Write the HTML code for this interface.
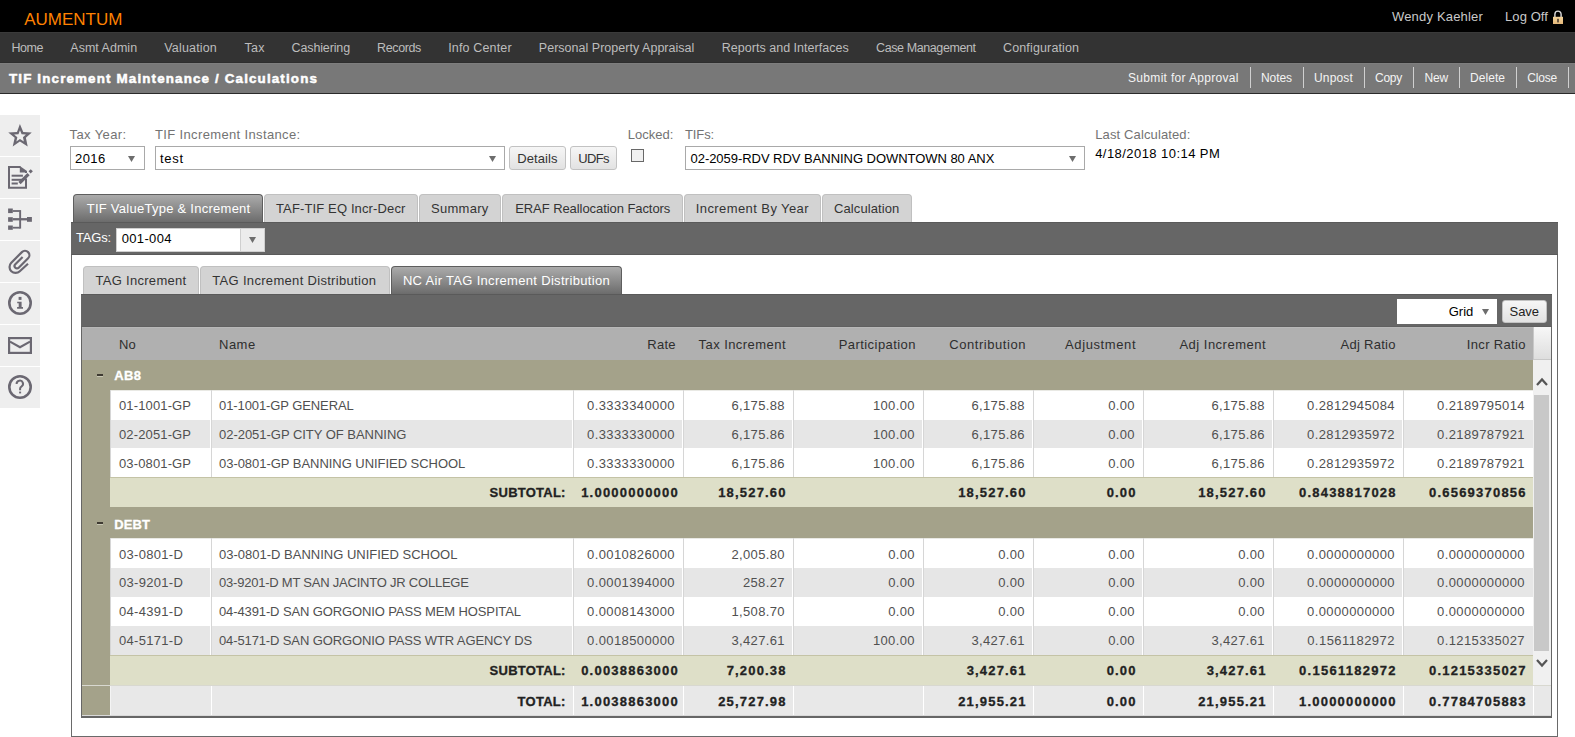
<!DOCTYPE html><html><head><meta charset="utf-8"><title>TIF Increment Maintenance</title><style>
html,body{margin:0;padding:0}
body{width:1575px;height:737px;overflow:hidden;position:relative;background:#fff;font-family:"Liberation Sans",sans-serif}
.a{position:absolute;box-sizing:border-box}
.t{position:absolute;white-space:nowrap}
svg{position:absolute;overflow:visible}
</style></head><body>
<div class="a" style="left:0px;top:0px;width:1575px;height:32px;background:#000"></div>
<div class="t" style="top:10.61px;font-size:17px;line-height:17px;color:#ff8200;letter-spacing:-0.029px;left:24.30px;">AUMENTUM</div>
<div class="t" style="top:10.00px;font-size:13px;line-height:13px;color:#c9c9c9;letter-spacing:0.179px;left:1392.00px;">Wendy Kaehler</div>
<div class="t" style="top:10.00px;font-size:13px;line-height:13px;color:#c9c9c9;letter-spacing:0.085px;left:1505.00px;">Log Off</div>
<svg style="left:1553px;top:9px" width="11" height="15" viewBox="0 0 11 15"><path d="M1.9 8 V5.2 A3.1 3.1 0 0 1 8.1 5.2 V8" fill="none" stroke="#dcdcdc" stroke-width="1.4"/><defs><linearGradient id="lg" x1="0" y1="0" x2="0" y2="1"><stop offset="0" stop-color="#f3d49a"/><stop offset="1" stop-color="#e4b77a"/></linearGradient></defs><rect x="0" y="7.8" width="10" height="7.2" fill="url(#lg)"/><rect x="4.2" y="9.8" width="1.6" height="3.6" fill="#4a3c30"/></svg>
<div class="a" style="left:0px;top:32px;width:1575px;height:31px;background:#333"></div>
<div class="a" style="left:0px;top:32px;width:1575px;height:1px;background:#3a3a3a"></div>
<div class="a" style="left:0px;top:62px;width:1575px;height:1px;background:#2e2e2e"></div>
<div class="t" style="top:42.42px;font-size:12.5px;line-height:12.5px;color:#bdbdbd;letter-spacing:-0.386px;left:11.40px;">Home</div>
<div class="t" style="top:42.42px;font-size:12.5px;line-height:12.5px;color:#bdbdbd;letter-spacing:0.011px;left:70.30px;">Asmt Admin</div>
<div class="t" style="top:42.42px;font-size:12.5px;line-height:12.5px;color:#bdbdbd;letter-spacing:0.165px;left:164.30px;">Valuation</div>
<div class="t" style="top:42.42px;font-size:12.5px;line-height:12.5px;color:#bdbdbd;letter-spacing:0.182px;left:244.60px;">Tax</div>
<div class="t" style="top:42.42px;font-size:12.5px;line-height:12.5px;color:#bdbdbd;letter-spacing:-0.137px;left:291.60px;">Cashiering</div>
<div class="t" style="top:42.42px;font-size:12.5px;line-height:12.5px;color:#bdbdbd;letter-spacing:-0.364px;left:377.00px;">Records</div>
<div class="t" style="top:42.42px;font-size:12.5px;line-height:12.5px;color:#bdbdbd;letter-spacing:0.152px;left:448.20px;">Info Center</div>
<div class="t" style="top:42.42px;font-size:12.5px;line-height:12.5px;color:#bdbdbd;letter-spacing:0.024px;left:538.80px;">Personal Property Appraisal</div>
<div class="t" style="top:42.42px;font-size:12.5px;line-height:12.5px;color:#bdbdbd;letter-spacing:0.021px;left:721.80px;">Reports and Interfaces</div>
<div class="t" style="top:42.42px;font-size:12.5px;line-height:12.5px;color:#bdbdbd;letter-spacing:-0.407px;left:876.10px;">Case Management</div>
<div class="t" style="top:42.42px;font-size:12.5px;line-height:12.5px;color:#bdbdbd;letter-spacing:0.142px;left:1003.00px;">Configuration</div>
<div class="a" style="left:0px;top:63px;width:1575px;height:30px;background:#787878"></div>
<div class="a" style="left:0px;top:63px;width:1575px;height:1px;background:#7e7e7e"></div>
<div class="a" style="left:0px;top:93px;width:1575px;height:1px;background:#2a2a2a"></div>
<div class="t" style="top:71.66px;font-size:13.4px;line-height:13.4px;color:#fff;font-weight:bold;-webkit-text-stroke:0.5px currentColor;letter-spacing:1.141px;left:9.00px;">TIF Increment Maintenance / Calculations</div>
<div class="t" style="top:71.84px;font-size:12px;line-height:12px;color:#f4f4f4;letter-spacing:0.321px;left:1128.00px;">Submit for Approval</div>
<div class="t" style="top:71.84px;font-size:12px;line-height:12px;color:#f4f4f4;letter-spacing:-0.069px;left:1261.00px;">Notes</div>
<div class="t" style="top:71.84px;font-size:12px;line-height:12px;color:#f4f4f4;letter-spacing:0.164px;left:1314.00px;">Unpost</div>
<div class="t" style="top:71.84px;font-size:12px;line-height:12px;color:#f4f4f4;letter-spacing:-0.254px;left:1375.00px;">Copy</div>
<div class="t" style="top:71.84px;font-size:12px;line-height:12px;color:#f4f4f4;letter-spacing:-0.272px;left:1424.60px;">New</div>
<div class="t" style="top:71.84px;font-size:12px;line-height:12px;color:#f4f4f4;letter-spacing:0.052px;left:1470.00px;">Delete</div>
<div class="t" style="top:71.84px;font-size:12px;line-height:12px;color:#f4f4f4;letter-spacing:-0.197px;left:1527.30px;">Close</div>
<div class="a" style="left:1250px;top:67px;width:1px;height:21px;background:#d0d0d0"></div>
<div class="a" style="left:1303px;top:67px;width:1px;height:21px;background:#d0d0d0"></div>
<div class="a" style="left:1364px;top:67px;width:1px;height:21px;background:#d0d0d0"></div>
<div class="a" style="left:1413px;top:67px;width:1px;height:21px;background:#d0d0d0"></div>
<div class="a" style="left:1459px;top:67px;width:1px;height:21px;background:#d0d0d0"></div>
<div class="a" style="left:1516px;top:67px;width:1px;height:21px;background:#d0d0d0"></div>
<div class="a" style="left:1568px;top:67px;width:1px;height:21px;background:#d0d0d0"></div>
<div class="a" style="left:0px;top:115px;width:40px;height:41px;background:#eeeeee"></div>
<div class="a" style="left:0px;top:157px;width:40px;height:41px;background:#eeeeee"></div>
<div class="a" style="left:0px;top:199px;width:40px;height:41px;background:#eeeeee"></div>
<div class="a" style="left:0px;top:241px;width:40px;height:41px;background:#eeeeee"></div>
<div class="a" style="left:0px;top:283px;width:40px;height:41px;background:#eeeeee"></div>
<div class="a" style="left:0px;top:325px;width:40px;height:41px;background:#eeeeee"></div>
<div class="a" style="left:0px;top:367px;width:40px;height:41px;background:#eeeeee"></div>
<svg style="left:8px;top:123px" width="24" height="24" viewBox="0 0 24 24"><path d="M11.90 0.90 L15.25 9.00 L23.75 9.40 L17.90 14.80 L19.70 23.50 L11.90 18.40 L4.70 23.50 L6.70 14.80 L0.25 9.40 L9.00 9.00 Z M11.95 7.25 L13.62 11.30 L17.88 11.50 L14.95 14.20 L15.85 18.55 L11.95 16.00 L8.35 18.55 L9.35 14.20 L6.12 11.50 L10.50 11.30 Z" fill="#6b6872" fill-rule="evenodd"/></svg>
<svg style="left:4px;top:160px" width="32" height="34" viewBox="0 0 32 34"><path d="M5 7 H16.5 M5 6 V28.8 M4 27.8 H23 M22 28.8 V18.5 M22 13 V11" fill="none" stroke="#6b6872" stroke-width="2"/><path d="M15.8 6 L23 11 V12.6 H15.8 Z" fill="#6b6872"/><rect x="7.6" y="14.7" width="11.3" height="2" fill="#6b6872"/><rect x="7.6" y="18.8" width="10.4" height="2" fill="#6b6872"/><rect x="7.6" y="22.5" width="6.2" height="2" fill="#6b6872"/><path d="M15.5 23.2 L24.5 14.2" stroke="#6b6872" stroke-width="3.2"/><path d="M25.6 12.4 L27.8 10.2" stroke="#6b6872" stroke-width="3"/></svg>
<svg style="left:4px;top:202px" width="32" height="34" viewBox="0 0 32 34"><g fill="#6b6872"><rect x="4.1" y="6.5" width="4.7" height="4.6"/><rect x="4.1" y="15.2" width="4.7" height="4.6"/><rect x="4.1" y="23.5" width="4.7" height="4.3"/><rect x="23" y="15" width="4.9" height="4.8"/><rect x="15.2" y="8.1" width="1.9" height="18.5"/><rect x="8.8" y="8.1" width="7" height="1.8"/><rect x="8.8" y="24.8" width="7" height="1.8"/><rect x="8.8" y="16.1" width="14.2" height="2.3"/></g></svg>
<svg style="left:4px;top:244px" width="32" height="34" viewBox="0 0 32 34"><path d="M24 19.8 L15.8 27.2 A6 6 0 0 1 7.3 18.7 L17.9 8.1 A4.38 4.38 0 0 1 24.1 14.3 L14.7 23.7 A2.4 2.4 0 0 1 11.3 20.3 L18.6 13" fill="none" stroke="#6b6872" stroke-width="2.2"/></svg>
<svg style="left:8px;top:291.3px" width="24" height="24" viewBox="0 0 24 24"><circle cx="12" cy="12" r="10.7" fill="none" stroke="#6b6872" stroke-width="2.6"/><rect x="10.6" y="5.9" width="2.9" height="3" fill="#6b6872"/><path d="M9.2 10.7 H13.6 V16.1 H15 V17.8 H9.1 V16.1 H10.7 V12.3 H9.2 Z" fill="#6b6872"/></svg>
<svg style="left:8px;top:337px" width="24" height="17" viewBox="0 0 24 17"><rect x="1.1" y="1.1" width="21.8" height="14.8" fill="none" stroke="#6b6872" stroke-width="2.2"/><path d="M2 4.6 L12 10.2 L22 4.6" fill="none" stroke="#6b6872" stroke-width="2.2"/></svg>
<svg style="left:8px;top:375.4px" width="24" height="24" viewBox="0 0 24 24"><circle cx="12" cy="12" r="10.7" fill="none" stroke="#6b6872" stroke-width="2.6"/><path d="M8.6 8.9 A3.2 3.2 0 1 1 13.4 11.6 Q12.1 12.4 12.1 13.8 V15.3" fill="none" stroke="#6b6872" stroke-width="2"/><rect x="11.1" y="16.6" width="2" height="1.8" fill="#6b6872"/></svg>
<div class="t" style="top:128.00px;font-size:13px;line-height:13px;color:#737373;letter-spacing:0.389px;left:69.60px;">Tax Year:</div>
<div class="t" style="top:128.00px;font-size:13px;line-height:13px;color:#737373;letter-spacing:0.357px;left:155.00px;">TIF Increment Instance:</div>
<div class="t" style="top:128.00px;font-size:13px;line-height:13px;color:#737373;letter-spacing:0.022px;left:627.80px;">Locked:</div>
<div class="t" style="top:128.00px;font-size:13px;line-height:13px;color:#737373;letter-spacing:-0.101px;left:685.00px;">TIFs:</div>
<div class="t" style="top:128.00px;font-size:13px;line-height:13px;color:#737373;letter-spacing:0.128px;left:1095.20px;">Last Calculated:</div>
<div class="t" style="top:147.00px;font-size:13px;line-height:13px;color:#000;letter-spacing:0.443px;left:1095.20px;">4/18/2018 10:14 PM</div>
<div class="a" style="left:70px;top:146px;width:75px;height:24px;background:#fff;border:1px solid #a9a9a9"></div>
<svg style="left:128.4px;top:156px" width="7" height="6" viewBox="0 0 7 6"><path d="M0 0 H7 L3.5 6 Z" fill="#6d6d6d"/></svg>
<div class="t" style="top:152.00px;font-size:13px;line-height:13px;color:#000;letter-spacing:0.406px;left:75.00px;">2016</div>
<div class="a" style="left:155px;top:146px;width:350px;height:24px;background:#fff;border:1px solid #a9a9a9"></div>
<svg style="left:488.7px;top:156px" width="7" height="6" viewBox="0 0 7 6"><path d="M0 0 H7 L3.5 6 Z" fill="#6d6d6d"/></svg>
<div class="t" style="top:152.00px;font-size:13px;line-height:13px;color:#000;letter-spacing:0.696px;left:160.00px;">test</div>
<div class="a" style="left:509px;top:146px;width:57px;height:24px;background:linear-gradient(#f6f6f6,#e2e2e2);border:1px solid #c2c2c2;border-radius:3px"></div>
<div class="t" style="top:152.00px;font-size:13px;line-height:13px;color:#333;letter-spacing:0.079px;left:517.20px;">Details</div>
<div class="a" style="left:570px;top:146px;width:47px;height:24px;background:linear-gradient(#f6f6f6,#e2e2e2);border:1px solid #c2c2c2;border-radius:3px"></div>
<div class="t" style="top:152.00px;font-size:13px;line-height:13px;color:#333;letter-spacing:-0.630px;left:578.30px;">UDFs</div>
<div class="a" style="left:631px;top:149px;width:13px;height:13px;background:#f0f0f0;border:1px solid #686868"></div>
<div class="a" style="left:685px;top:146px;width:400px;height:24px;background:#fff;border:1px solid #a9a9a9"></div>
<svg style="left:1069px;top:156px" width="7" height="6" viewBox="0 0 7 6"><path d="M0 0 H7 L3.5 6 Z" fill="#6d6d6d"/></svg>
<div class="t" style="top:152.00px;font-size:13px;line-height:13px;color:#000;letter-spacing:-0.040px;left:690.50px;">02-2059-RDV RDV BANNING DOWNTOWN 80 ANX</div>
<div class="a" style="left:73px;top:194px;width:190px;height:28px;background:linear-gradient(#ababab,#6c6c6c);border:1px solid #5e5e5e;border-bottom:none;border-radius:4px 4px 0 0"></div>
<div class="t" style="top:202.00px;font-size:13px;line-height:13px;color:#fff;letter-spacing:0.261px;left:86.70px;">TIF ValueType &amp; Increment</div>
<div class="a" style="left:264px;top:194px;width:154px;height:28px;background:#d3d3d3;border:1px solid #c0c0c0;border-bottom:none;border-radius:4px 4px 0 0"></div>
<div class="t" style="top:202.00px;font-size:13px;line-height:13px;color:#333;letter-spacing:0.133px;left:276.00px;">TAF-TIF EQ Incr-Decr</div>
<div class="a" style="left:419px;top:194px;width:82px;height:28px;background:#d3d3d3;border:1px solid #c0c0c0;border-bottom:none;border-radius:4px 4px 0 0"></div>
<div class="t" style="top:202.00px;font-size:13px;line-height:13px;color:#333;letter-spacing:0.282px;left:431.00px;">Summary</div>
<div class="a" style="left:502px;top:194px;width:181px;height:28px;background:#d3d3d3;border:1px solid #c0c0c0;border-bottom:none;border-radius:4px 4px 0 0"></div>
<div class="t" style="top:202.00px;font-size:13px;line-height:13px;color:#333;letter-spacing:-0.069px;left:515.20px;">ERAF Reallocation Factors</div>
<div class="a" style="left:684px;top:194px;width:137px;height:28px;background:#d3d3d3;border:1px solid #c0c0c0;border-bottom:none;border-radius:4px 4px 0 0"></div>
<div class="t" style="top:202.00px;font-size:13px;line-height:13px;color:#333;letter-spacing:0.409px;left:695.80px;">Increment By Year</div>
<div class="a" style="left:822px;top:194px;width:90px;height:28px;background:#d3d3d3;border:1px solid #c0c0c0;border-bottom:none;border-radius:4px 4px 0 0"></div>
<div class="t" style="top:202.00px;font-size:13px;line-height:13px;color:#333;letter-spacing:0.096px;left:834.00px;">Calculation</div>
<div class="a" style="left:71px;top:222px;width:1487px;height:515px;border:1px solid #6a6a6a;border-top:none;background:#fff"></div>
<div class="a" style="left:71px;top:222px;width:1487px;height:33px;background:#666"></div>
<div class="a" style="left:71px;top:222px;width:1487px;height:1px;background:#5a5a5a"></div>
<div class="a" style="left:71px;top:254px;width:1487px;height:1px;background:#5a5a5a"></div>
<div class="t" style="top:231.00px;font-size:13px;line-height:13px;color:#fff;letter-spacing:-0.172px;left:76.00px;">TAGs:</div>
<div class="a" style="left:116px;top:228px;width:149px;height:24px;background:#fff;border:1px solid #cfcfcf"></div>
<div class="a" style="left:240px;top:229px;width:24px;height:22px;background:#ececec;border-left:1px solid #cfcfcf"></div>
<svg style="left:249px;top:237px" width="7" height="6" viewBox="0 0 7 6"><path d="M0 0 H7 L3.5 6 Z" fill="#6d6d6d"/></svg>
<div class="t" style="top:232.00px;font-size:13px;line-height:13px;color:#000;letter-spacing:0.348px;left:121.70px;">001-004</div>
<div class="a" style="left:83px;top:266px;width:116px;height:28px;background:#d3d3d3;border:1px solid #c0c0c0;border-bottom:none;border-radius:4px 4px 0 0"></div>
<div class="t" style="top:274.00px;font-size:13px;line-height:13px;color:#333;letter-spacing:0.279px;left:95.60px;">TAG Increment</div>
<div class="a" style="left:200px;top:266px;width:190px;height:28px;background:#d3d3d3;border:1px solid #c0c0c0;border-bottom:none;border-radius:4px 4px 0 0"></div>
<div class="t" style="top:274.00px;font-size:13px;line-height:13px;color:#333;letter-spacing:0.314px;left:212.30px;">TAG Increment Distribution</div>
<div class="a" style="left:391px;top:266px;width:231px;height:28px;background:linear-gradient(#ababab,#6c6c6c);border:1px solid #5e5e5e;border-bottom:none;border-radius:4px 4px 0 0"></div>
<div class="t" style="top:274.00px;font-size:13px;line-height:13px;color:#fff;letter-spacing:0.313px;left:402.90px;">NC Air TAG Increment Distribution</div>
<div class="a" style="left:81px;top:294px;width:1471px;height:424px;background:#666"></div>
<div class="a" style="left:81px;top:294px;width:1471px;height:1px;background:#5a5a5a"></div>
<div class="a" style="left:81px;top:326px;width:1471px;height:1px;background:#606060"></div>
<div class="a" style="left:1397px;top:299px;width:100px;height:25px;background:#fff"></div>
<div class="t" style="top:305.00px;font-size:13px;line-height:13px;color:#000;right:101.69px;">Grid</div>
<svg style="left:1482px;top:309px" width="7" height="6" viewBox="0 0 7 6"><path d="M0 0 H7 L3.5 6 Z" fill="#6d6d6d"/></svg>
<div class="a" style="left:1502px;top:300px;width:45px;height:23px;background:linear-gradient(#f6f6f6,#e2e2e2);border:1px solid #c2c2c2;border-radius:3px"></div>
<div class="t" style="top:305.00px;font-size:13px;line-height:13px;color:#222;letter-spacing:-0.060px;left:1509.60px;">Save</div>
<div class="a" style="left:82px;top:327px;width:1451px;height:33px;background:#b0b0b0"></div>
<div class="a" style="left:82px;top:327px;width:1451px;height:1px;background:#b8b8b8"></div>
<div class="a" style="left:1533px;top:327px;width:18px;height:33px;background:linear-gradient(#f7f7f7,#dedede);border-bottom:1px solid #c8c8c8;border-left:1px solid #c8c8c8"></div>
<div class="t" style="top:338.00px;font-size:13px;line-height:13px;color:#2e2e2e;letter-spacing:0.178px;left:119.00px;">No</div>
<div class="t" style="top:338.00px;font-size:13px;line-height:13px;color:#2e2e2e;letter-spacing:0.494px;left:219.00px;">Name</div>
<div class="t" style="top:338.00px;font-size:13px;line-height:13px;color:#2e2e2e;letter-spacing:0.257px;right:899.24px;">Rate</div>
<div class="t" style="top:338.00px;font-size:13px;line-height:13px;color:#2e2e2e;letter-spacing:0.445px;right:789.06px;">Tax Increment</div>
<div class="t" style="top:338.00px;font-size:13px;line-height:13px;color:#2e2e2e;letter-spacing:0.440px;right:659.06px;">Participation</div>
<div class="t" style="top:338.00px;font-size:13px;line-height:13px;color:#2e2e2e;letter-spacing:0.563px;right:548.94px;">Contribution</div>
<div class="t" style="top:338.00px;font-size:13px;line-height:13px;color:#2e2e2e;letter-spacing:0.606px;right:438.89px;">Adjustment</div>
<div class="t" style="top:338.00px;font-size:13px;line-height:13px;color:#2e2e2e;letter-spacing:0.487px;right:309.01px;">Adj Increment</div>
<div class="t" style="top:338.00px;font-size:13px;line-height:13px;color:#2e2e2e;letter-spacing:0.275px;right:179.22px;">Adj Ratio</div>
<div class="t" style="top:338.00px;font-size:13px;line-height:13px;color:#2e2e2e;letter-spacing:0.345px;right:49.16px;">Incr Ratio</div>
<div class="a" style="left:1533px;top:360px;width:18px;height:325px;background:#f0f0f0"></div>
<div class="a" style="left:1534px;top:395px;width:15px;height:256px;background:#c8c8c8"></div>
<svg style="left:1536px;top:377px" width="12" height="9" viewBox="0 0 12 9"><path d="M1 8 L6 2.5 L11 8" fill="none" stroke="#555" stroke-width="2.2"/></svg>
<svg style="left:1536px;top:659px" width="12" height="9" viewBox="0 0 12 9"><path d="M1 1 L6 6.5 L11 1" fill="none" stroke="#555" stroke-width="2.2"/></svg>
<div class="a" style="left:82px;top:360px;width:1451px;height:356px;background:#a4a28a"></div>
<div class="a" style="left:97px;top:374px;width:6px;height:2px;background:#3e3a32"></div>
<div class="a" style="left:97px;top:376px;width:6px;height:1px;background:#c8c7b4"></div>
<div class="t" style="top:369.00px;font-size:13px;line-height:13px;color:#fff;font-weight:bold;-webkit-text-stroke:0.3px currentColor;letter-spacing:0.384px;left:114.20px;">AB8</div>
<div class="a" style="left:110px;top:390px;width:1423px;height:30px;background:#fff"></div>
<div class="a" style="left:110px;top:390px;width:1423px;height:1px;background:#e9e9e4"></div>
<div class="a" style="left:110px;top:390px;width:1px;height:30px;background:#d6d6d6"></div>
<div class="a" style="left:211px;top:390px;width:1px;height:30px;background:#d6d6d6"></div>
<div class="a" style="left:573px;top:390px;width:1px;height:30px;background:#d6d6d6"></div>
<div class="a" style="left:683px;top:390px;width:1px;height:30px;background:#d6d6d6"></div>
<div class="a" style="left:793px;top:390px;width:1px;height:30px;background:#d6d6d6"></div>
<div class="a" style="left:923px;top:390px;width:1px;height:30px;background:#d6d6d6"></div>
<div class="a" style="left:1033px;top:390px;width:1px;height:30px;background:#d6d6d6"></div>
<div class="a" style="left:1143px;top:390px;width:1px;height:30px;background:#d6d6d6"></div>
<div class="a" style="left:1273px;top:390px;width:1px;height:30px;background:#d6d6d6"></div>
<div class="a" style="left:1403px;top:390px;width:1px;height:30px;background:#d6d6d6"></div>
<div class="t" style="top:399.00px;font-size:13px;line-height:13px;color:#505050;letter-spacing:0.134px;left:119.00px;">01-1001-GP</div>
<div class="t" style="top:399.00px;font-size:13px;line-height:13px;color:#505050;letter-spacing:-0.089px;left:219.00px;">01-1001-GP GENERAL</div>
<div class="t" style="top:399.00px;font-size:13px;line-height:13px;color:#505050;letter-spacing:0.389px;right:900.11px;">0.3333340000</div>
<div class="t" style="top:399.00px;font-size:13px;line-height:13px;color:#505050;letter-spacing:0.355px;right:790.14px;">6,175.88</div>
<div class="t" style="top:399.00px;font-size:13px;line-height:13px;color:#505050;letter-spacing:0.372px;right:660.13px;">100.00</div>
<div class="t" style="top:399.00px;font-size:13px;line-height:13px;color:#505050;letter-spacing:0.355px;right:550.14px;">6,175.88</div>
<div class="t" style="top:399.00px;font-size:13px;line-height:13px;color:#505050;letter-spacing:0.355px;right:440.14px;">0.00</div>
<div class="t" style="top:399.00px;font-size:13px;line-height:13px;color:#505050;letter-spacing:0.355px;right:310.14px;">6,175.88</div>
<div class="t" style="top:399.00px;font-size:13px;line-height:13px;color:#505050;letter-spacing:0.389px;right:180.11px;">0.2812945084</div>
<div class="t" style="top:399.00px;font-size:13px;line-height:13px;color:#505050;letter-spacing:0.389px;right:50.11px;">0.2189795014</div>
<div class="a" style="left:110px;top:420px;width:1423px;height:28px;background:#e6e6e6"></div>
<div class="a" style="left:110px;top:420px;width:1px;height:28px;background:#d6d6d6"></div>
<div class="a" style="left:211px;top:420px;width:1px;height:28px;background:#d6d6d6"></div>
<div class="a" style="left:210px;top:420px;width:1px;height:28px;background:#fff"></div>
<div class="a" style="left:573px;top:420px;width:1px;height:28px;background:#d6d6d6"></div>
<div class="a" style="left:572px;top:420px;width:1px;height:28px;background:#fff"></div>
<div class="a" style="left:683px;top:420px;width:1px;height:28px;background:#d6d6d6"></div>
<div class="a" style="left:682px;top:420px;width:1px;height:28px;background:#fff"></div>
<div class="a" style="left:793px;top:420px;width:1px;height:28px;background:#d6d6d6"></div>
<div class="a" style="left:792px;top:420px;width:1px;height:28px;background:#fff"></div>
<div class="a" style="left:923px;top:420px;width:1px;height:28px;background:#d6d6d6"></div>
<div class="a" style="left:922px;top:420px;width:1px;height:28px;background:#fff"></div>
<div class="a" style="left:1033px;top:420px;width:1px;height:28px;background:#d6d6d6"></div>
<div class="a" style="left:1032px;top:420px;width:1px;height:28px;background:#fff"></div>
<div class="a" style="left:1143px;top:420px;width:1px;height:28px;background:#d6d6d6"></div>
<div class="a" style="left:1142px;top:420px;width:1px;height:28px;background:#fff"></div>
<div class="a" style="left:1273px;top:420px;width:1px;height:28px;background:#d6d6d6"></div>
<div class="a" style="left:1272px;top:420px;width:1px;height:28px;background:#fff"></div>
<div class="a" style="left:1403px;top:420px;width:1px;height:28px;background:#d6d6d6"></div>
<div class="a" style="left:1402px;top:420px;width:1px;height:28px;background:#fff"></div>
<div class="t" style="top:428.00px;font-size:13px;line-height:13px;color:#505050;letter-spacing:0.134px;left:119.00px;">02-2051-GP</div>
<div class="t" style="top:428.00px;font-size:13px;line-height:13px;color:#505050;letter-spacing:-0.029px;left:219.00px;">02-2051-GP CITY OF BANNING</div>
<div class="t" style="top:428.00px;font-size:13px;line-height:13px;color:#505050;letter-spacing:0.389px;right:900.11px;">0.3333330000</div>
<div class="t" style="top:428.00px;font-size:13px;line-height:13px;color:#505050;letter-spacing:0.355px;right:790.14px;">6,175.86</div>
<div class="t" style="top:428.00px;font-size:13px;line-height:13px;color:#505050;letter-spacing:0.372px;right:660.13px;">100.00</div>
<div class="t" style="top:428.00px;font-size:13px;line-height:13px;color:#505050;letter-spacing:0.355px;right:550.14px;">6,175.86</div>
<div class="t" style="top:428.00px;font-size:13px;line-height:13px;color:#505050;letter-spacing:0.355px;right:440.14px;">0.00</div>
<div class="t" style="top:428.00px;font-size:13px;line-height:13px;color:#505050;letter-spacing:0.355px;right:310.14px;">6,175.86</div>
<div class="t" style="top:428.00px;font-size:13px;line-height:13px;color:#505050;letter-spacing:0.389px;right:180.11px;">0.2812935972</div>
<div class="t" style="top:428.00px;font-size:13px;line-height:13px;color:#505050;letter-spacing:0.389px;right:50.11px;">0.2189787921</div>
<div class="a" style="left:110px;top:448px;width:1423px;height:29px;background:#fff"></div>
<div class="a" style="left:110px;top:448px;width:1px;height:29px;background:#d6d6d6"></div>
<div class="a" style="left:211px;top:448px;width:1px;height:29px;background:#d6d6d6"></div>
<div class="a" style="left:573px;top:448px;width:1px;height:29px;background:#d6d6d6"></div>
<div class="a" style="left:683px;top:448px;width:1px;height:29px;background:#d6d6d6"></div>
<div class="a" style="left:793px;top:448px;width:1px;height:29px;background:#d6d6d6"></div>
<div class="a" style="left:923px;top:448px;width:1px;height:29px;background:#d6d6d6"></div>
<div class="a" style="left:1033px;top:448px;width:1px;height:29px;background:#d6d6d6"></div>
<div class="a" style="left:1143px;top:448px;width:1px;height:29px;background:#d6d6d6"></div>
<div class="a" style="left:1273px;top:448px;width:1px;height:29px;background:#d6d6d6"></div>
<div class="a" style="left:1403px;top:448px;width:1px;height:29px;background:#d6d6d6"></div>
<div class="t" style="top:457.00px;font-size:13px;line-height:13px;color:#505050;letter-spacing:0.134px;left:119.00px;">03-0801-GP</div>
<div class="t" style="top:457.00px;font-size:13px;line-height:13px;color:#505050;letter-spacing:-0.039px;left:219.00px;">03-0801-GP BANNING UNIFIED SCHOOL</div>
<div class="t" style="top:457.00px;font-size:13px;line-height:13px;color:#505050;letter-spacing:0.389px;right:900.11px;">0.3333330000</div>
<div class="t" style="top:457.00px;font-size:13px;line-height:13px;color:#505050;letter-spacing:0.355px;right:790.14px;">6,175.86</div>
<div class="t" style="top:457.00px;font-size:13px;line-height:13px;color:#505050;letter-spacing:0.372px;right:660.13px;">100.00</div>
<div class="t" style="top:457.00px;font-size:13px;line-height:13px;color:#505050;letter-spacing:0.355px;right:550.14px;">6,175.86</div>
<div class="t" style="top:457.00px;font-size:13px;line-height:13px;color:#505050;letter-spacing:0.355px;right:440.14px;">0.00</div>
<div class="t" style="top:457.00px;font-size:13px;line-height:13px;color:#505050;letter-spacing:0.355px;right:310.14px;">6,175.86</div>
<div class="t" style="top:457.00px;font-size:13px;line-height:13px;color:#505050;letter-spacing:0.389px;right:180.11px;">0.2812935972</div>
<div class="t" style="top:457.00px;font-size:13px;line-height:13px;color:#505050;letter-spacing:0.389px;right:50.11px;">0.2189787921</div>
<div class="a" style="left:110px;top:477px;width:1423px;height:30px;background:#dedfc8"></div>
<div class="a" style="left:110px;top:477px;width:1423px;height:1px;background:#c4c3a6"></div>
<div class="t" style="top:486.00px;font-size:13px;line-height:13px;color:#222;font-weight:bold;-webkit-text-stroke:0.3px currentColor;letter-spacing:0.236px;right:1009.36px;">SUBTOTAL:</div>
<div class="t" style="top:486.00px;font-size:13px;line-height:13px;color:#222;font-weight:bold;-webkit-text-stroke:0.3px currentColor;letter-spacing:1.217px;right:896.08px;">1.0000000000</div>
<div class="t" style="top:486.00px;font-size:13px;line-height:13px;color:#222;font-weight:bold;-webkit-text-stroke:0.3px currentColor;letter-spacing:1.187px;right:788.31px;">18,527.60</div>
<div class="t" style="top:486.00px;font-size:13px;line-height:13px;color:#222;font-weight:bold;-webkit-text-stroke:0.3px currentColor;letter-spacing:1.187px;right:548.31px;">18,527.60</div>
<div class="t" style="top:486.00px;font-size:13px;line-height:13px;color:#222;font-weight:bold;-webkit-text-stroke:0.3px currentColor;letter-spacing:1.181px;right:438.32px;">0.00</div>
<div class="t" style="top:486.00px;font-size:13px;line-height:13px;color:#222;font-weight:bold;-webkit-text-stroke:0.3px currentColor;letter-spacing:1.187px;right:308.31px;">18,527.60</div>
<div class="t" style="top:486.00px;font-size:13px;line-height:13px;color:#222;font-weight:bold;-webkit-text-stroke:0.3px currentColor;letter-spacing:1.217px;right:178.28px;">0.8438817028</div>
<div class="t" style="top:486.00px;font-size:13px;line-height:13px;color:#222;font-weight:bold;-webkit-text-stroke:0.3px currentColor;letter-spacing:1.217px;right:48.28px;">0.6569370856</div>
<div class="a" style="left:97px;top:522px;width:6px;height:2px;background:#3e3a32"></div>
<div class="a" style="left:97px;top:524px;width:6px;height:1px;background:#c8c7b4"></div>
<div class="t" style="top:518.00px;font-size:13px;line-height:13px;color:#fff;font-weight:bold;-webkit-text-stroke:0.3px currentColor;letter-spacing:0.160px;left:114.20px;">DEBT</div>
<div class="a" style="left:110px;top:538px;width:1423px;height:30px;background:#fff"></div>
<div class="a" style="left:110px;top:538px;width:1423px;height:1px;background:#e9e9e4"></div>
<div class="a" style="left:110px;top:538px;width:1px;height:30px;background:#d6d6d6"></div>
<div class="a" style="left:211px;top:538px;width:1px;height:30px;background:#d6d6d6"></div>
<div class="a" style="left:573px;top:538px;width:1px;height:30px;background:#d6d6d6"></div>
<div class="a" style="left:683px;top:538px;width:1px;height:30px;background:#d6d6d6"></div>
<div class="a" style="left:793px;top:538px;width:1px;height:30px;background:#d6d6d6"></div>
<div class="a" style="left:923px;top:538px;width:1px;height:30px;background:#d6d6d6"></div>
<div class="a" style="left:1033px;top:538px;width:1px;height:30px;background:#d6d6d6"></div>
<div class="a" style="left:1143px;top:538px;width:1px;height:30px;background:#d6d6d6"></div>
<div class="a" style="left:1273px;top:538px;width:1px;height:30px;background:#d6d6d6"></div>
<div class="a" style="left:1403px;top:538px;width:1px;height:30px;background:#d6d6d6"></div>
<div class="t" style="top:548.00px;font-size:13px;line-height:13px;color:#505050;letter-spacing:0.293px;left:119.00px;">03-0801-D</div>
<div class="t" style="top:548.00px;font-size:13px;line-height:13px;color:#505050;left:219.00px;">03-0801-D BANNING UNIFIED SCHOOL</div>
<div class="t" style="top:548.00px;font-size:13px;line-height:13px;color:#505050;letter-spacing:0.389px;right:900.11px;">0.0010826000</div>
<div class="t" style="top:548.00px;font-size:13px;line-height:13px;color:#505050;letter-spacing:0.355px;right:790.14px;">2,005.80</div>
<div class="t" style="top:548.00px;font-size:13px;line-height:13px;color:#505050;letter-spacing:0.355px;right:660.14px;">0.00</div>
<div class="t" style="top:548.00px;font-size:13px;line-height:13px;color:#505050;letter-spacing:0.355px;right:550.14px;">0.00</div>
<div class="t" style="top:548.00px;font-size:13px;line-height:13px;color:#505050;letter-spacing:0.355px;right:440.14px;">0.00</div>
<div class="t" style="top:548.00px;font-size:13px;line-height:13px;color:#505050;letter-spacing:0.355px;right:310.14px;">0.00</div>
<div class="t" style="top:548.00px;font-size:13px;line-height:13px;color:#505050;letter-spacing:0.389px;right:180.11px;">0.0000000000</div>
<div class="t" style="top:548.00px;font-size:13px;line-height:13px;color:#505050;letter-spacing:0.389px;right:50.11px;">0.0000000000</div>
<div class="a" style="left:110px;top:568px;width:1423px;height:29px;background:#e6e6e6"></div>
<div class="a" style="left:110px;top:568px;width:1px;height:29px;background:#d6d6d6"></div>
<div class="a" style="left:211px;top:568px;width:1px;height:29px;background:#d6d6d6"></div>
<div class="a" style="left:210px;top:568px;width:1px;height:29px;background:#fff"></div>
<div class="a" style="left:573px;top:568px;width:1px;height:29px;background:#d6d6d6"></div>
<div class="a" style="left:572px;top:568px;width:1px;height:29px;background:#fff"></div>
<div class="a" style="left:683px;top:568px;width:1px;height:29px;background:#d6d6d6"></div>
<div class="a" style="left:682px;top:568px;width:1px;height:29px;background:#fff"></div>
<div class="a" style="left:793px;top:568px;width:1px;height:29px;background:#d6d6d6"></div>
<div class="a" style="left:792px;top:568px;width:1px;height:29px;background:#fff"></div>
<div class="a" style="left:923px;top:568px;width:1px;height:29px;background:#d6d6d6"></div>
<div class="a" style="left:922px;top:568px;width:1px;height:29px;background:#fff"></div>
<div class="a" style="left:1033px;top:568px;width:1px;height:29px;background:#d6d6d6"></div>
<div class="a" style="left:1032px;top:568px;width:1px;height:29px;background:#fff"></div>
<div class="a" style="left:1143px;top:568px;width:1px;height:29px;background:#d6d6d6"></div>
<div class="a" style="left:1142px;top:568px;width:1px;height:29px;background:#fff"></div>
<div class="a" style="left:1273px;top:568px;width:1px;height:29px;background:#d6d6d6"></div>
<div class="a" style="left:1272px;top:568px;width:1px;height:29px;background:#fff"></div>
<div class="a" style="left:1403px;top:568px;width:1px;height:29px;background:#d6d6d6"></div>
<div class="a" style="left:1402px;top:568px;width:1px;height:29px;background:#fff"></div>
<div class="t" style="top:576.00px;font-size:13px;line-height:13px;color:#505050;letter-spacing:0.293px;left:119.00px;">03-9201-D</div>
<div class="t" style="top:576.00px;font-size:13px;line-height:13px;color:#505050;letter-spacing:-0.221px;left:219.00px;">03-9201-D MT SAN JACINTO JR COLLEGE</div>
<div class="t" style="top:576.00px;font-size:13px;line-height:13px;color:#505050;letter-spacing:0.389px;right:900.11px;">0.0001394000</div>
<div class="t" style="top:576.00px;font-size:13px;line-height:13px;color:#505050;letter-spacing:0.372px;right:790.13px;">258.27</div>
<div class="t" style="top:576.00px;font-size:13px;line-height:13px;color:#505050;letter-spacing:0.355px;right:660.14px;">0.00</div>
<div class="t" style="top:576.00px;font-size:13px;line-height:13px;color:#505050;letter-spacing:0.355px;right:550.14px;">0.00</div>
<div class="t" style="top:576.00px;font-size:13px;line-height:13px;color:#505050;letter-spacing:0.355px;right:440.14px;">0.00</div>
<div class="t" style="top:576.00px;font-size:13px;line-height:13px;color:#505050;letter-spacing:0.355px;right:310.14px;">0.00</div>
<div class="t" style="top:576.00px;font-size:13px;line-height:13px;color:#505050;letter-spacing:0.389px;right:180.11px;">0.0000000000</div>
<div class="t" style="top:576.00px;font-size:13px;line-height:13px;color:#505050;letter-spacing:0.389px;right:50.11px;">0.0000000000</div>
<div class="a" style="left:110px;top:597px;width:1423px;height:29px;background:#fff"></div>
<div class="a" style="left:110px;top:597px;width:1px;height:29px;background:#d6d6d6"></div>
<div class="a" style="left:211px;top:597px;width:1px;height:29px;background:#d6d6d6"></div>
<div class="a" style="left:573px;top:597px;width:1px;height:29px;background:#d6d6d6"></div>
<div class="a" style="left:683px;top:597px;width:1px;height:29px;background:#d6d6d6"></div>
<div class="a" style="left:793px;top:597px;width:1px;height:29px;background:#d6d6d6"></div>
<div class="a" style="left:923px;top:597px;width:1px;height:29px;background:#d6d6d6"></div>
<div class="a" style="left:1033px;top:597px;width:1px;height:29px;background:#d6d6d6"></div>
<div class="a" style="left:1143px;top:597px;width:1px;height:29px;background:#d6d6d6"></div>
<div class="a" style="left:1273px;top:597px;width:1px;height:29px;background:#d6d6d6"></div>
<div class="a" style="left:1403px;top:597px;width:1px;height:29px;background:#d6d6d6"></div>
<div class="t" style="top:605.00px;font-size:13px;line-height:13px;color:#505050;letter-spacing:0.293px;left:119.00px;">04-4391-D</div>
<div class="t" style="top:605.00px;font-size:13px;line-height:13px;color:#505050;letter-spacing:-0.116px;left:219.00px;">04-4391-D SAN GORGONIO PASS MEM HOSPITAL</div>
<div class="t" style="top:605.00px;font-size:13px;line-height:13px;color:#505050;letter-spacing:0.389px;right:900.11px;">0.0008143000</div>
<div class="t" style="top:605.00px;font-size:13px;line-height:13px;color:#505050;letter-spacing:0.355px;right:790.14px;">1,508.70</div>
<div class="t" style="top:605.00px;font-size:13px;line-height:13px;color:#505050;letter-spacing:0.355px;right:660.14px;">0.00</div>
<div class="t" style="top:605.00px;font-size:13px;line-height:13px;color:#505050;letter-spacing:0.355px;right:550.14px;">0.00</div>
<div class="t" style="top:605.00px;font-size:13px;line-height:13px;color:#505050;letter-spacing:0.355px;right:440.14px;">0.00</div>
<div class="t" style="top:605.00px;font-size:13px;line-height:13px;color:#505050;letter-spacing:0.355px;right:310.14px;">0.00</div>
<div class="t" style="top:605.00px;font-size:13px;line-height:13px;color:#505050;letter-spacing:0.389px;right:180.11px;">0.0000000000</div>
<div class="t" style="top:605.00px;font-size:13px;line-height:13px;color:#505050;letter-spacing:0.389px;right:50.11px;">0.0000000000</div>
<div class="a" style="left:110px;top:626px;width:1423px;height:29px;background:#e6e6e6"></div>
<div class="a" style="left:110px;top:626px;width:1px;height:29px;background:#d6d6d6"></div>
<div class="a" style="left:211px;top:626px;width:1px;height:29px;background:#d6d6d6"></div>
<div class="a" style="left:210px;top:626px;width:1px;height:29px;background:#fff"></div>
<div class="a" style="left:573px;top:626px;width:1px;height:29px;background:#d6d6d6"></div>
<div class="a" style="left:572px;top:626px;width:1px;height:29px;background:#fff"></div>
<div class="a" style="left:683px;top:626px;width:1px;height:29px;background:#d6d6d6"></div>
<div class="a" style="left:682px;top:626px;width:1px;height:29px;background:#fff"></div>
<div class="a" style="left:793px;top:626px;width:1px;height:29px;background:#d6d6d6"></div>
<div class="a" style="left:792px;top:626px;width:1px;height:29px;background:#fff"></div>
<div class="a" style="left:923px;top:626px;width:1px;height:29px;background:#d6d6d6"></div>
<div class="a" style="left:922px;top:626px;width:1px;height:29px;background:#fff"></div>
<div class="a" style="left:1033px;top:626px;width:1px;height:29px;background:#d6d6d6"></div>
<div class="a" style="left:1032px;top:626px;width:1px;height:29px;background:#fff"></div>
<div class="a" style="left:1143px;top:626px;width:1px;height:29px;background:#d6d6d6"></div>
<div class="a" style="left:1142px;top:626px;width:1px;height:29px;background:#fff"></div>
<div class="a" style="left:1273px;top:626px;width:1px;height:29px;background:#d6d6d6"></div>
<div class="a" style="left:1272px;top:626px;width:1px;height:29px;background:#fff"></div>
<div class="a" style="left:1403px;top:626px;width:1px;height:29px;background:#d6d6d6"></div>
<div class="a" style="left:1402px;top:626px;width:1px;height:29px;background:#fff"></div>
<div class="t" style="top:634.00px;font-size:13px;line-height:13px;color:#505050;letter-spacing:0.293px;left:119.00px;">04-5171-D</div>
<div class="t" style="top:634.00px;font-size:13px;line-height:13px;color:#505050;letter-spacing:-0.122px;left:219.00px;">04-5171-D SAN GORGONIO PASS WTR AGENCY DS</div>
<div class="t" style="top:634.00px;font-size:13px;line-height:13px;color:#505050;letter-spacing:0.389px;right:900.11px;">0.0018500000</div>
<div class="t" style="top:634.00px;font-size:13px;line-height:13px;color:#505050;letter-spacing:0.355px;right:790.14px;">3,427.61</div>
<div class="t" style="top:634.00px;font-size:13px;line-height:13px;color:#505050;letter-spacing:0.372px;right:660.13px;">100.00</div>
<div class="t" style="top:634.00px;font-size:13px;line-height:13px;color:#505050;letter-spacing:0.355px;right:550.14px;">3,427.61</div>
<div class="t" style="top:634.00px;font-size:13px;line-height:13px;color:#505050;letter-spacing:0.355px;right:440.14px;">0.00</div>
<div class="t" style="top:634.00px;font-size:13px;line-height:13px;color:#505050;letter-spacing:0.355px;right:310.14px;">3,427.61</div>
<div class="t" style="top:634.00px;font-size:13px;line-height:13px;color:#505050;letter-spacing:0.470px;right:180.03px;">0.1561182972</div>
<div class="t" style="top:634.00px;font-size:13px;line-height:13px;color:#505050;letter-spacing:0.389px;right:50.11px;">0.1215335027</div>
<div class="a" style="left:110px;top:655px;width:1423px;height:30px;background:#dedfc8"></div>
<div class="a" style="left:110px;top:655px;width:1423px;height:1px;background:#c4c3a6"></div>
<div class="t" style="top:664.00px;font-size:13px;line-height:13px;color:#222;font-weight:bold;-webkit-text-stroke:0.3px currentColor;letter-spacing:0.236px;right:1009.36px;">SUBTOTAL:</div>
<div class="t" style="top:664.00px;font-size:13px;line-height:13px;color:#222;font-weight:bold;-webkit-text-stroke:0.3px currentColor;letter-spacing:1.217px;right:896.08px;">0.0038863000</div>
<div class="t" style="top:664.00px;font-size:13px;line-height:13px;color:#222;font-weight:bold;-webkit-text-stroke:0.3px currentColor;letter-spacing:1.181px;right:788.32px;">7,200.38</div>
<div class="t" style="top:664.00px;font-size:13px;line-height:13px;color:#222;font-weight:bold;-webkit-text-stroke:0.3px currentColor;letter-spacing:1.181px;right:548.32px;">3,427.61</div>
<div class="t" style="top:664.00px;font-size:13px;line-height:13px;color:#222;font-weight:bold;-webkit-text-stroke:0.3px currentColor;letter-spacing:1.181px;right:438.32px;">0.00</div>
<div class="t" style="top:664.00px;font-size:13px;line-height:13px;color:#222;font-weight:bold;-webkit-text-stroke:0.3px currentColor;letter-spacing:1.181px;right:308.32px;">3,427.61</div>
<div class="t" style="top:664.00px;font-size:13px;line-height:13px;color:#222;font-weight:bold;-webkit-text-stroke:0.3px currentColor;letter-spacing:1.277px;right:178.22px;">0.1561182972</div>
<div class="t" style="top:664.00px;font-size:13px;line-height:13px;color:#222;font-weight:bold;-webkit-text-stroke:0.3px currentColor;letter-spacing:1.217px;right:48.28px;">0.1215335027</div>
<div class="a" style="left:82px;top:685px;width:1469px;height:1px;background:#d8d8d0"></div>
<div class="a" style="left:82px;top:686px;width:28px;height:30px;background:#a4a28a"></div>
<div class="a" style="left:110px;top:686px;width:1423px;height:30px;background:#e8e8e8"></div>
<div class="a" style="left:211px;top:686px;width:1px;height:30px;background:#fff"></div>
<div class="a" style="left:573px;top:686px;width:1px;height:30px;background:#fff"></div>
<div class="a" style="left:683px;top:686px;width:1px;height:30px;background:#fff"></div>
<div class="a" style="left:793px;top:686px;width:1px;height:30px;background:#fff"></div>
<div class="a" style="left:923px;top:686px;width:1px;height:30px;background:#fff"></div>
<div class="a" style="left:1033px;top:686px;width:1px;height:30px;background:#fff"></div>
<div class="a" style="left:1143px;top:686px;width:1px;height:30px;background:#fff"></div>
<div class="a" style="left:1273px;top:686px;width:1px;height:30px;background:#fff"></div>
<div class="a" style="left:1403px;top:686px;width:1px;height:30px;background:#fff"></div>
<div class="a" style="left:1533px;top:686px;width:1px;height:30px;background:#fff"></div>
<div class="t" style="top:695.00px;font-size:13px;line-height:13px;color:#222;font-weight:bold;-webkit-text-stroke:0.3px currentColor;letter-spacing:0.272px;right:1009.33px;">TOTAL:</div>
<div class="t" style="top:695.00px;font-size:13px;line-height:13px;color:#222;font-weight:bold;-webkit-text-stroke:0.3px currentColor;letter-spacing:1.217px;right:896.08px;">1.0038863000</div>
<div class="t" style="top:695.00px;font-size:13px;line-height:13px;color:#222;font-weight:bold;-webkit-text-stroke:0.3px currentColor;letter-spacing:1.187px;right:788.31px;">25,727.98</div>
<div class="t" style="top:695.00px;font-size:13px;line-height:13px;color:#222;font-weight:bold;-webkit-text-stroke:0.3px currentColor;letter-spacing:1.187px;right:548.31px;">21,955.21</div>
<div class="t" style="top:695.00px;font-size:13px;line-height:13px;color:#222;font-weight:bold;-webkit-text-stroke:0.3px currentColor;letter-spacing:1.181px;right:438.32px;">0.00</div>
<div class="t" style="top:695.00px;font-size:13px;line-height:13px;color:#222;font-weight:bold;-webkit-text-stroke:0.3px currentColor;letter-spacing:1.187px;right:308.31px;">21,955.21</div>
<div class="t" style="top:695.00px;font-size:13px;line-height:13px;color:#222;font-weight:bold;-webkit-text-stroke:0.3px currentColor;letter-spacing:1.217px;right:178.28px;">1.0000000000</div>
<div class="t" style="top:695.00px;font-size:13px;line-height:13px;color:#222;font-weight:bold;-webkit-text-stroke:0.3px currentColor;letter-spacing:1.217px;right:48.28px;">0.7784705883</div>
<div class="a" style="left:1533px;top:686px;width:18px;height:30px;background:#e8e8e8;border-left:1px solid #fff"></div>
<div class="a" style="left:110px;top:686px;width:1px;height:30px;background:#f4f4f4"></div>
<div class="a" style="left:82px;top:715px;width:1469px;height:1px;background:#d9d9d9"></div>
</body></html>
